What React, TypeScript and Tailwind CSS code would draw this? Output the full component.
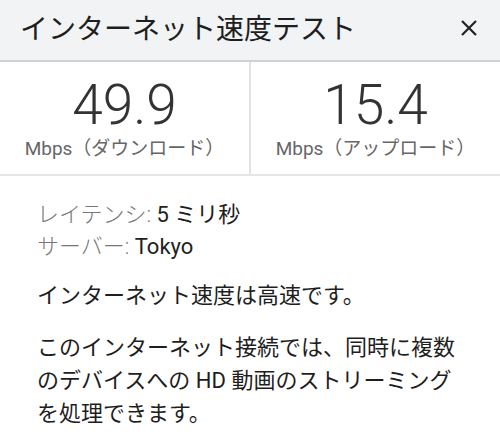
import React from "react"

const font = { fontFamily: "Roboto, 'Noto Sans CJK JP', sans-serif" }

function Stat({ value, label }: { value: string; label: string }) {
	return (
		<div className="flex flex-1 flex-col items-center pt-[13px]">
			<div className="text-[55px] font-light leading-[60px] text-[#333]">{value}</div>
			<div className="mt-[3px] text-[19px] leading-[22px] text-[#666]">{label}</div>
		</div>
	)
}

export default function App() {
	return (
		<div className="h-[435px] w-[500px] overflow-hidden bg-white" style={font}>
			<div className="flex h-[62px] items-center justify-between border-b-2 border-[#cfd2d3] bg-[#f1f3f4] pl-[20px] pr-[22px]">
				<h1 className="text-[28px] leading-none text-[#1e1e1e]">インターネット速度テスト</h1>
				<svg width="18" height="18" viewBox="0 0 18 18" className="mb-[4px]">
					<path d="M2 2 L16 16 M16 2 L2 16" stroke="#222" strokeWidth="2.2" />
				</svg>
			</div>
			<div className="flex h-[114px] border-b-2 border-[#e6e6e6]">
				<Stat value="49.9" label="Mbps（ダウンロード）" />
				<div className="w-[2px] bg-[#e3e3e3]" />
				<Stat value="15.4" label="Mbps（アップロード）" />
			</div>
			<div className="px-[37px] pt-[23px] text-[22px] leading-[32px] text-[#1e1e1e]">
				<div>
					<span className="font-light text-[#777]">レイテンシ: </span>5 ミリ秒
				</div>
				<div>
					<span className="font-light text-[#777]">サーバー: </span>Tokyo
				</div>
				<p className="mt-[17px]">インターネット速度は高速です。</p>
				<p className="mt-[19px] leading-[33px]">
					このインターネット接続では、同時に複数
					<br />
					のデバイスへの HD 動画のストリーミング
					<br />
					を処理できます。
				</p>
			</div>
		</div>
	)
}
